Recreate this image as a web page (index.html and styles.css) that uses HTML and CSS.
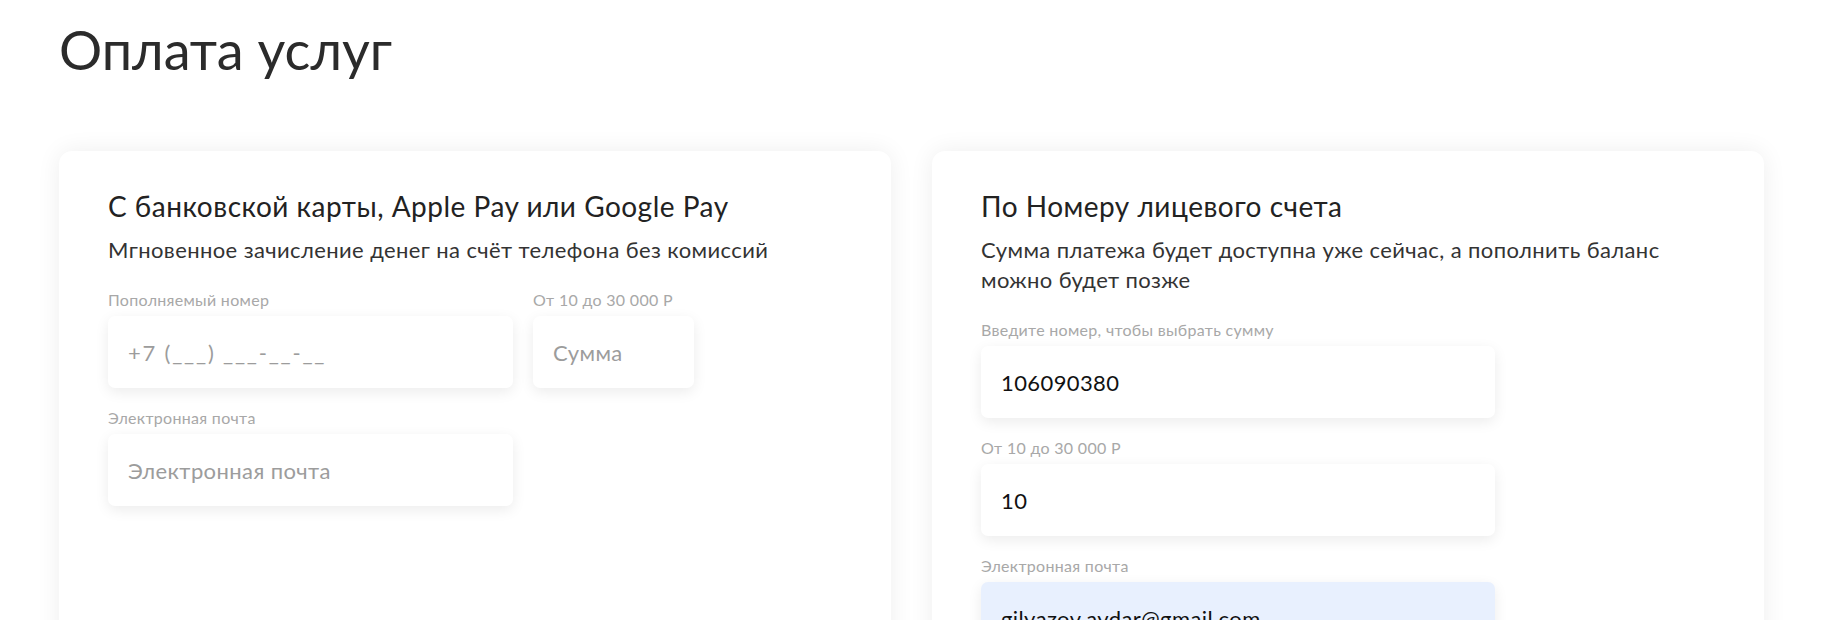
FILE: index.html
```html
<!DOCTYPE html>
<html lang="ru">
<head>
<meta charset="utf-8">
<title>Оплата услуг</title>
<link rel="stylesheet" href="styles.css">
</head>
<body>
<main class="page">
  <h1 class="page-title">Оплата услуг</h1>
  <div class="cards">
    <section class="card">
      <h2 class="card-title">С банковской карты, Apple Pay или Google Pay</h2>
      <p class="card-text">Мгновенное зачисление денег на счёт телефона без комиссий</p>
      <div class="row">
        <label class="field field-phone">
          <span class="field-label">Пополняемый номер</span>
          <input class="input input-phone" type="text" placeholder="+7 (___) ___-__-__">
        </label>
        <label class="field field-sum">
          <span class="field-label">От 10 до 30 000 Р</span>
          <input class="input" type="text" placeholder="Сумма">
        </label>
      </div>
      <label class="field field-phone">
        <span class="field-label">Электронная почта</span>
        <input class="input" type="text" placeholder="Электронная почта">
      </label>
    </section>
    <section class="card">
      <h2 class="card-title">По Номеру лицевого счета</h2>
      <p class="card-text">Сумма платежа будет доступна уже сейчас, а пополнить баланс можно будет позже</p>
      <label class="field field-wide">
        <span class="field-label">Введите номер, чтобы выбрать сумму</span>
        <input class="input" type="text" value="106090380">
      </label>
      <label class="field field-wide">
        <span class="field-label">От 10 до 30 000 Р</span>
        <input class="input" type="text" value="10">
      </label>
      <label class="field field-wide">
        <span class="field-label">Электронная почта</span>
        <input class="input input-filled" type="text" value="gilyazov.aydar@gmail.com">
      </label>
    </section>
  </div>
</main>
</body>
</html>
```
FILE: styles.css
```css
* {
  box-sizing: border-box;
}

html, body {
  margin: 0;
  background: #ffffff;
}

body {
  font-family: "Lato", "Noto Sans", sans-serif;
  color: #222222;
}

.page {
  padding: 18px 59px 0 59px;
}

.page-title {
  margin: 0 0 69px 0;
  font-size: 54px;
  line-height: 64px;
  font-weight: 400;
  color: #2b2b2b;
}

.cards {
  display: grid;
  grid-template-columns: 832px 832px;
  column-gap: 41px;
  align-items: stretch;
}

.card {
  display: flex;
  flex-direction: column;
  align-items: flex-start;
  min-height: 640px;
  padding: 38px 49px 40px 49px;
  background: #ffffff;
  border-radius: 13px;
  box-shadow: 0 0 24px rgba(0, 0, 0, 0.07);
}

.card-title {
  margin: 0;
  font-size: 28px;
  line-height: 34px;
  letter-spacing: 0.5px;
  font-weight: 400;
  color: #222222;
}

.card-text {
  margin: 12px 0 0 0;
  font-size: 22px;
  line-height: 30px;
  letter-spacing: 0.4px;
  color: #333333;
}

.row {
  display: flex;
  gap: 20px;
}

.field {
  display: flex;
  flex-direction: column;
  margin-top: 21px;
}

.card-text + .row .field,
.card-text + .field {
  margin-top: 26px;
}

.field-label {
  font-size: 16px;
  line-height: 18px;
  letter-spacing: 0.3px;
  color: #a8a8a8;
  margin-bottom: 7px;
}

.field-phone {
  width: 405px;
}

.field-sum {
  width: 161px;
}

.field-wide {
  width: 514px;
}

.input {
  width: 100%;
  height: 72px;
  padding: 0 20px;
  border: none;
  outline: none;
  border-radius: 7px;
  background: #ffffff;
  box-shadow: 0 4px 14px rgba(0, 0, 0, 0.08);
  font-family: inherit;
  font-size: 22px;
  letter-spacing: 0.4px;
  color: #111111;
}

.input-phone {
  letter-spacing: 1.8px;
}

.input::placeholder {
  color: #9c9c9c;
}

.input-filled {
  background: #e8f0fe;
}
```
